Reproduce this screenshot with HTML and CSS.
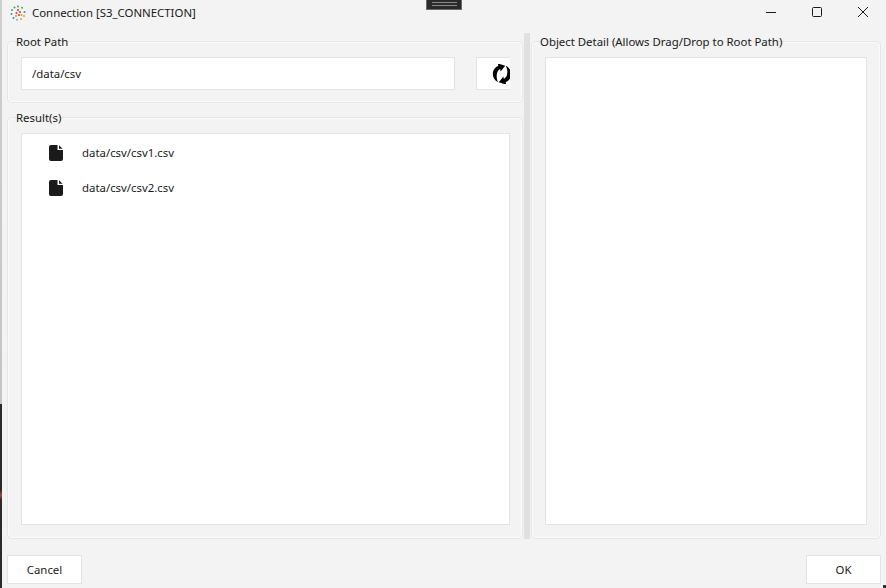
FILE: index.html
```html
<!DOCTYPE html>
<html lang="en">
<head>
  <meta charset="UTF-8" />
  <meta name="viewport" content="width=device-width, initial-scale=1.0"/>
  <title>Connection [S3_CONNECTION]</title>
  <link rel="stylesheet" href="styles.css">
</head>
<body>
  <div class="desktop-edge"></div>
  <div class="drag-handle"></div>
  <div class="corner-mark"></div>

  <header class="titlebar">
    <svg class="app-icon" width="16" height="16" viewBox="0 0 16 16">
      <g fill="#3f9a78">
        <circle cx="8" cy="1.500" r="1"/><circle cx="12" cy="2.800" r="1" fill="#55a83f"/><circle cx="14.500" cy="7" r="1" fill="#3f88c8"/>
        <circle cx="14" cy="11" r="1" fill="#dcae2c"/><circle cx="11" cy="14" r="1" fill="#dcae2c"/><circle cx="7" cy="14.800" r="1" fill="#7fb0d6"/>
        <circle cx="3.500" cy="13" r="1" fill="#3f88c8"/><circle cx="1.500" cy="9" r="1" fill="#3f88c8"/><circle cx="2" cy="5" r="1" fill="#55a83f"/><circle cx="4.500" cy="2.500" r="1"/>
      </g>
      <g fill="#d8482c">
        <circle cx="8" cy="5" r="1.100"/><circle cx="10" cy="7" r="1.100"/><circle cx="6.500" cy="8" r="1.100"/><circle cx="9" cy="10" r="1.100"/><circle cx="6" cy="11" r="1" fill="#e8923a"/><circle cx="11.500" cy="10" r="1" fill="#e8923a"/>
      </g>
    </svg>
    <span class="title-text">Connection [S3_CONNECTION]</span>
    <div class="window-controls">
      <svg width="46" height="24" viewBox="0 0 46 24"><path d="M18 12.500h10" stroke="#1a1a1a" fill="none"/></svg>
      <svg width="46" height="24" viewBox="0 0 46 24"><rect x="18.500" y="7.500" width="9" height="9" rx="1" stroke="#1a1a1a" fill="none"/></svg>
      <svg width="46" height="24" viewBox="0 0 46 24"><path d="M18 7l10 10M28 7L18 17" stroke="#1a1a1a" fill="none"/></svg>
    </div>
  </header>

  <main class="panes">
    <div class="left-pane">
      <fieldset class="group root-group">
        <legend>Root Path</legend>
        <div class="root-row">
          <div class="text-field">/data/csv</div>
          <button class="refresh-btn" aria-label="Refresh">
            <svg width="20" height="20" viewBox="0 0 20 20">
              <g transform="rotate(15 10 10)">
                <path d="M8.500 19C3.500 17.800 0.800 14 0.800 10 0.800 7 2.300 4.500 4.300 3L3.300 0.800 11 1.300 8 8 7 5.700C5.500 7 4.800 9 5 11 5.200 14 6.500 17 8.500 19z" fill="#000"/>
                <path d="M8.500 19C3.500 17.800 0.800 14 0.800 10 0.800 7 2.300 4.500 4.300 3L3.300 0.800 11 1.300 8 8 7 5.700C5.500 7 4.800 9 5 11 5.200 14 6.500 17 8.500 19z" fill="#000" transform="rotate(180 10 10)"/>
              </g>
            </svg>
          </button>
        </div>
      </fieldset>

      <fieldset class="group results-group">
        <legend>Result(s)</legend>
        <ul class="list-box">
          <li class="file-row">
            <svg width="14" height="16" viewBox="0 0 14 16"><path d="M2 0H8.500V5H14V14a2 2 0 0 1-2 2H2a2 2 0 0 1-2-2V2a2 2 0 0 1 2-2zM10 0.300L13.700 3.800H10z" fill="#1a1a1a"/></svg>
            <span>data/csv/csv1.csv</span>
          </li>
          <li class="file-row">
            <svg width="14" height="16" viewBox="0 0 14 16"><path d="M2 0H8.500V5H14V14a2 2 0 0 1-2 2H2a2 2 0 0 1-2-2V2a2 2 0 0 1 2-2zM10 0.300L13.700 3.800H10z" fill="#1a1a1a"/></svg>
            <span>data/csv/csv2.csv</span>
          </li>
        </ul>
      </fieldset>
    </div>

    <div class="splitter"></div>

    <fieldset class="group detail-group">
      <legend>Object Detail (Allows Drag/Drop to Root Path)</legend>
      <div class="detail-box"></div>
    </fieldset>
  </main>

  <footer class="button-bar">
    <button class="dialog-btn">Cancel</button>
    <button class="dialog-btn">OK</button>
  </footer>
</body>
</html>
```

FILE: styles.css
```css
* {
  box-sizing: border-box;
}

body {
  margin: 0;
  width: 886px;
  height: 588px;
  overflow: hidden;
  position: relative;
  background: #f3f3f3;
  color: #1a1a1a;
  font-family: "Noto Sans", sans-serif;
  font-size: 11.4px;
  line-height: 16px;
  display: flex;
  flex-direction: column;
}

.desktop-edge {
  position: absolute;
  top: 0;
  left: 0;
  width: 2px;
  height: 100%;
  background: linear-gradient(to bottom, #cfcfcf 0, #c4c4c4 404px, #2b2b2b 404px, #2b2b2b 490px, #a84545 495px, #2b2b2b 500px, #2b2b2b 100%);
}

.drag-handle {
  position: absolute;
  top: 0;
  left: 426px;
  width: 36px;
  height: 10px;
  background-color: #2b2b2b;
  background-image: linear-gradient(#8a8a8a, #8a8a8a), linear-gradient(#8a8a8a, #8a8a8a);
  background-size: 25px 1px;
  background-position: 5px 2px, 5px 5px;
  background-repeat: no-repeat;
  border: 1px solid #6a6a6a;
  border-top: 0;
}

.corner-mark {
  position: absolute;
  right: 0;
  bottom: 0;
  width: 3px;
  height: 3px;
  background: #333;
}

.titlebar {
  height: 34px;
  padding: 0 0 8px 10px;
  display: flex;
  align-items: center;
}

.app-icon {
  margin-right: 6px;
}

.window-controls {
  margin-left: auto;
  align-self: flex-start;
  display: flex;
}

.window-controls svg {
  display: block;
}

.panes {
  flex: 1;
  min-height: 0;
  padding: 0 6px 1px 8px;
  display: grid;
  grid-template-columns: 514px 6px 1fr;
  column-gap: 2px;
}

.left-pane {
  display: flex;
  flex-direction: column;
  gap: 8px;
  min-height: 0;
}

.group {
  margin: 0;
  min-width: 0;
  background: transparent;
  border: 1px solid #fbfbfb;
  border-radius: 4px;
  box-shadow: 0 0 0 1px #e6e6e6;
}

.group legend {
  padding: 0 3px;
  margin-left: -8px;
  line-height: 16px;
}

.root-group {
  height: 68px;
  padding: 7px 11px 0 12px;
}

.root-row {
  display: flex;
  gap: 21px;
}

.text-field {
  flex: 1;
  height: 33px;
  padding: 0 10px;
  background: #fff;
  border: 1px solid #e3e3e3;
  display: flex;
  align-items: center;
}

.refresh-btn {
  width: 34px;
  height: 33px;
  padding: 0 0 0 15px;
  background: #fff;
  border: 1px solid #e3e3e3;
  border-right: 0;
  overflow: hidden;
  display: flex;
  align-items: center;
}

.refresh-btn svg {
  flex: none;
}

.results-group {
  flex: 1;
  min-height: 0;
  padding: 7px 11px 12px 12px;
}

.list-box {
  height: 100%;
  margin: 0;
  padding: 1px 0 0 27px;
  list-style: none;
  background: #fff;
  border: 1px solid #e3e3e3;
}

.file-row {
  height: 35px;
  display: flex;
  align-items: center;
  gap: 19px;
}

.detail-group {
  padding: 7px 12px 12px 12px;
}

.detail-box {
  height: 100%;
  background: #fff;
  border: 1px solid #e3e3e3;
}

.splitter {
  margin: -1px 0 -1px;
  background: #e0e0e0;
}

.button-bar {
  height: 49px;
  padding: 16px 5px 4px 7px;
  display: flex;
  justify-content: space-between;
}

.dialog-btn {
  width: 75px;
  height: 29px;
  padding: 0;
  background: #fff;
  border: 1px solid #e3e3e3;
  color: #1a1a1a;
  font: inherit;
}
```
